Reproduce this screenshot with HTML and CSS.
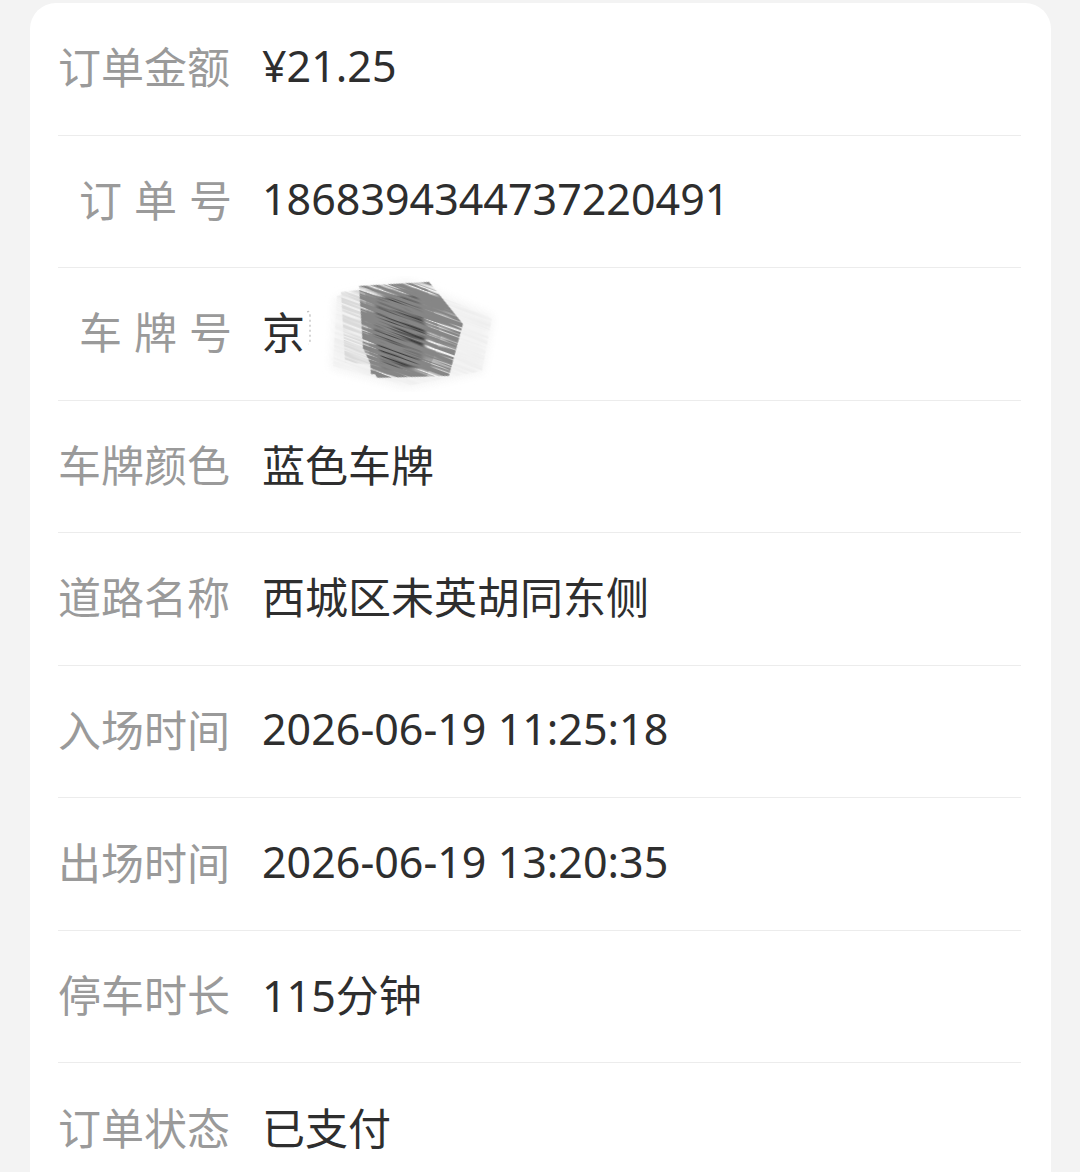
FILE: index.html
```html
<!DOCTYPE html>
<html lang="zh-CN">
<head>
<meta charset="utf-8">
<link rel="stylesheet" href="styles.css">
</head>
<body>
<div class="card">
  <div class="row"><div class="label">订单金额</div><div class="value">¥21.25</div></div>
  <div class="row"><div class="label spaced">订单号</div><div class="value">1868394344737220491</div></div>
  <div class="row"><div class="label spaced">车牌号</div><div class="value plate"><span>京</span>
    <svg class="scribble" width="200" height="116" viewBox="0 0 200 116" aria-hidden="true">
      <defs>
        <filter id="soft" x="-30%" y="-30%" width="160%" height="160%"><feGaussianBlur stdDeviation="5"/></filter>
        <filter id="soft2" x="-30%" y="-30%" width="160%" height="160%"><feGaussianBlur stdDeviation="2"/></filter>
        <filter id="dark" x="0" y="0" width="100%" height="100%">
          <feTurbulence type="fractalNoise" baseFrequency="0.012 0.45" numOctaves="3" seed="7" result="n"/>
          <feColorMatrix in="n" type="matrix" values="0 0 0 0 0.24  0 0 0 0 0.24  0 0 0 0 0.24  0 0 0 4.5 -1.3" result="m"/>
          <feComposite in="m" in2="SourceGraphic" operator="in"/>
        </filter>
        <filter id="light" x="0" y="0" width="100%" height="100%">
          <feTurbulence type="fractalNoise" baseFrequency="0.015 0.5" numOctaves="3" seed="3" result="n"/>
          <feColorMatrix in="n" type="matrix" values="0 0 0 0 0.7  0 0 0 0 0.7  0 0 0 0 0.7  0 0 0 3.5 -1.1" result="m"/>
          <feComposite in="m" in2="SourceGraphic" operator="in"/>
        </filter>
        <filter id="faint" x="0" y="0" width="100%" height="100%">
          <feTurbulence type="fractalNoise" baseFrequency="0.015 0.4" numOctaves="2" seed="9" result="n"/>
          <feColorMatrix in="n" type="matrix" values="0 0 0 0 0.85  0 0 0 0 0.85  0 0 0 0 0.85  0 0 0 2.5 -0.9" result="m"/>
          <feComposite in="m" in2="SourceGraphic" operator="in"/>
        </filter>
      </defs>
      <polygon points="28,22 100,4 186,40 176,96 100,112 24,92" fill="#f2f2f2" filter="url(#soft)" opacity="0.9"/>
      <g transform="rotate(20 100 58)">
        <g filter="url(#faint)">
          <polygon transform="rotate(-20 100 58)" points="30,20 100,6 185,42 175,95 100,110 26,90" fill="#000"/>
        </g>
        <g filter="url(#light)">
          <polygon transform="rotate(-20 100 58)" points="34,16 72,12 74,90 38,86" fill="#000"/>
        </g>
        <g filter="url(#dark)">
          <polygon transform="rotate(-20 100 58)" points="52,10 122,6 156,48 142,100 70,102 56,72" fill="#000"/>
        </g>
      </g>
      <polygon points="70,22 112,18 120,58 112,92 76,94 66,56" fill="#3a3a3a" filter="url(#soft2)"/>
      <g transform="rotate(20 100 58)">
        <g filter="url(#dark)">
          <polygon transform="rotate(-20 100 58)" points="58,14 120,12 134,60 120,100 64,98" fill="#000"/>
        </g>
      </g>
      <path d="M0 36 q3 -2 3 4 v24 q0 4 -2 4" stroke="#c4c4c4" stroke-width="1.4" fill="none" stroke-dasharray="2 3"/>
    </svg>
  </div></div>
  <div class="row"><div class="label">车牌颜色</div><div class="value">蓝色车牌</div></div>
  <div class="row"><div class="label">道路名称</div><div class="value">西城区未英胡同东侧</div></div>
  <div class="row"><div class="label">入场时间</div><div class="value">2026-06-19 11:25:18</div></div>
  <div class="row"><div class="label">出场时间</div><div class="value">2026-06-19 13:20:35</div></div>
  <div class="row"><div class="label">停车时长</div><div class="value">115分钟</div></div>
  <div class="row last"><div class="label">订单状态</div><div class="value">已支付</div></div>
</div>
</body>
</html>
```

FILE: styles.css
```css
html, body {
  margin: 0;
  padding: 0;
  background: #f3f3f3;
  height: 1172px;
  overflow: hidden;
}
body {
  font-family: "Noto Sans", "Noto Sans CJK SC", sans-serif;
}
.card {
  margin: 3px 0 0 30px;
  width: 1021px;
  background: #ffffff;
  border-radius: 26px 26px 0 0;
  padding: 0 30px 0 28px;
  box-sizing: border-box;
  min-height: 1200px;
}
.row {
  height: 132.55px;
  box-sizing: border-box;
  border-bottom: 1px solid #ececec;
  display: flex;
  align-items: center;
  padding-bottom: 6px;
}
.row.last { border-bottom: none; }
.label {
  width: 174px;
  flex: none;
  font-size: 43px;
  color: #9a9a9a;
  white-space: nowrap;
  text-align: left;
}
.label.spaced {
  text-align: right;
  letter-spacing: 12px;
  margin-right: -12px;
  width: 186px;
}
.value {
  margin-left: 30px;
  font-size: 43px;
  color: #2e2e2e;
  white-space: nowrap;
  display: flex;
  align-items: center;
}
.plate .scribble {
  display: block;
  margin-left: 2px;
  margin-top: 6px;
}
```
